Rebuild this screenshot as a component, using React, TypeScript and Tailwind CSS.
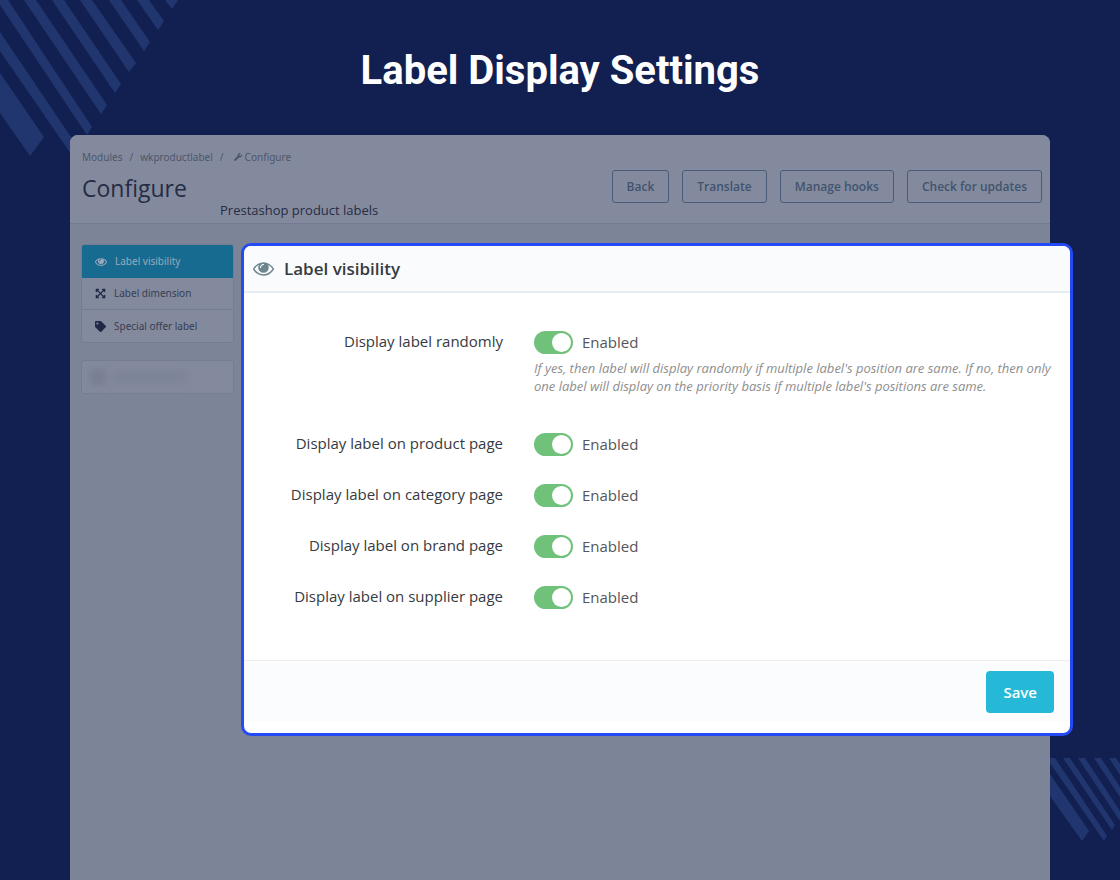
import { useState } from 'react'
import type { ReactNode } from 'react'
import { FaExpandArrowsAlt, FaTag, FaWrench } from 'react-icons/fa'

type SwitchItem = {
	id: string
	label: string
	help?: string
}

const switches: SwitchItem[] = [
	{
		id: 'randomly',
		label: 'Display label randomly',
		help: "If yes, then label will display randomly if multiple label's position are same. If no, then only one label will display on the priority basis if multiple label's positions are same.",
	},
	{ id: 'product', label: 'Display label on product page' },
	{ id: 'category', label: 'Display label on category page' },
	{ id: 'brand', label: 'Display label on brand page' },
	{ id: 'supplier', label: 'Display label on supplier page' },
]

const actions = ['Back', 'Translate', 'Manage hooks', 'Check for updates']

function EyeIcon({ className }: { className: string }) {
	return (
		<svg viewBox="0 384 1792 1152" fill="currentColor" className={className} aria-hidden="true">
			<path d="M1664 960q-152-236-381-353 61 104 61 225 0 185-131.5 316.5T896 1280t-316.5-131.5T448 832q0-121 61-225-229 117-381 353 133 205 333.5 326.5T896 1408t434.5-121.5T1664 960zM944 576q0-20-14-34t-34-14q-125 0-214.5 89.5T592 832q0 20 14 34t34 14 34-14 14-34q0-86 61-147t147-61q20 0 34-14t14-34zm848 384q0 34-20 69-140 230-376.5 368.5T896 1536t-499.5-139T20 1029Q0 994 0 960t20-69q140-229 376.5-368T896 384t499.5 139T1772 891q20 35 20 69z" />
		</svg>
	)
}

// Diagonal stripes in two corners of the backdrop
function Stripes() {
	return (
		<>
			<svg width="180" height="160" fill="#21366e" className="absolute left-0 top-0" aria-hidden="true">
				<path d="M0 73L44 137L30 156L0 113Z" />
				<path d="M0 32L71 137V154L0 51Z" />
				<path d="M0 0H8L92 127L87 135L0 5Z" />
				<path d="M24 0H36L107 105L101 114Z" />
				<path d="M52 0H64L121 84L115 93Z" />
				<path d="M80 0H92L136 63L129 72Z" />
				<path d="M109 0H121L150 42L144 51Z" />
				<path d="M137 0H149L164 21L158 30Z" />
				<path d="M165 0H178L172 9Z" />
			</svg>
			<svg width="70" height="83" fill="#21366e" className="absolute bottom-[39px] right-0" aria-hidden="true">
				<path d="M0 16L39 73L32 83L0 38Z" />
				<path d="M0 0H5L57 78L54 83L0 5Z" />
				<path d="M13 0H20L65 67L62 72Z" />
				<path d="M28 0H35L70 53V63Z" />
				<path d="M44 0H51L70 29V39Z" />
				<path d="M59 0H66L70 6V17Z" />
			</svg>
		</>
	)
}

function NavItem({ icon, active, children }: { icon: ReactNode; active?: boolean; children: ReactNode }) {
	return (
		<a
			href="#"
			className={
				active
					? 'flex h-[33px] items-center gap-2 bg-[#176b90] px-[13px] text-[#9aa9bc]'
					: 'flex h-8 items-center gap-2 border-b border-[#757d90] px-[13px] text-[#363d52] last:border-b-0'
			}
		>
			{icon}
			{children}
		</a>
	)
}

function SwitchRow({ item }: { item: SwitchItem }) {
	const [enabled, setEnabled] = useState<boolean>(true)

	return (
		<div className="grid grid-cols-[259px_1fr] gap-x-[31px]">
			<label htmlFor={item.id} className="text-right text-[15px] leading-[21px] text-[#363a41]">
				{item.label}
			</label>
			<div>
				<div className="flex items-center gap-[9px]">
					<input
						id={item.id}
						type="checkbox"
						role="switch"
						checked={enabled}
						onChange={(e) => setEnabled(e.target.checked)}
						className="flex h-[23px] w-[39px] shrink-0 cursor-pointer appearance-none items-center rounded-full bg-gray-300 p-[2px] before:block before:size-[19px] before:rounded-full before:bg-white checked:justify-end checked:bg-[#70c17a]"
					/>
					<span className="text-[15px] leading-[23px] text-[#54565b]">{enabled ? 'Enabled' : 'Disabled'}</span>
				</div>
				{item.help && (
					<p className="mb-[10px] mt-[5px] text-[13px] leading-[18px] text-[#8e8e8e] italic">{item.help}</p>
				)}
			</div>
		</div>
	)
}

function App() {
	return (
		<div className="relative flex min-h-screen flex-col overflow-hidden bg-[#112050] font-['Open_Sans',sans-serif]">
			<Stripes />
			<h1 className="relative pb-10 pt-[47px] text-center font-['Roboto',sans-serif] text-[40px] leading-[48px] font-bold text-white">
				Label Display Settings
			</h1>

			<div className="relative mx-[70px] flex flex-1 flex-col rounded-t-lg bg-[#7c8497]">
				<header className="flex h-[89px] items-start justify-between rounded-t-lg border-b border-[#737c90] bg-[#848a9d] pl-3 pr-2">
					<div>
						<nav className="flex items-center pt-[14px] font-['Noto_Sans','Open_Sans',sans-serif] text-[10px] leading-4 text-[#4c566b]">
							<a href="#">Modules</a>
							<span className="mx-[7px]">/</span>
							<a href="#">wkproductlabel</a>
							<span className="mx-[7px]">/</span>
							<a href="#" className="flex items-center gap-[3px] pl-[3px]">
								<FaWrench className="size-2" />
								Configure
							</a>
						</nav>
						<h2 className="mt-[7px] text-[23px] leading-8 text-[#242c45]">Configure</h2>
						<p className="-mt-[2px] ml-[138px] text-[13px] leading-4 text-[#242c45]">Prestashop product labels</p>
					</div>
					<div className="flex gap-[13px] pt-[35px]">
						{actions.map((action) => (
							<button
								key={action}
								type="button"
								className="h-[33px] rounded-[3px] border border-[#485c79] px-[14px] text-xs font-semibold text-[#40536f]"
							>
								{action}
							</button>
						))}
					</div>
				</header>

				<main className="flex items-start pl-[11px] pt-[19px]">
					<aside className="mt-px w-[153px] shrink-0 font-['Noto_Sans','Open_Sans',sans-serif] text-[10px]">
						<nav className="overflow-hidden rounded-[3px] border border-[#757d90] bg-[#848a9d]">
							<NavItem active icon={<EyeIcon className="h-2 w-3" />}>
								Label visibility
							</NavItem>
							<NavItem icon={<FaExpandArrowsAlt className="size-[11px] text-[#202845]" />}>Label dimension</NavItem>
							<NavItem icon={<FaTag className="size-[11px] text-[#202845]" />}>Special offer label</NavItem>
						</nav>
						<div className="mt-[17px] flex h-[34px] items-center gap-2 rounded-[3px] border border-[#757d90] bg-[#848a9d] px-2">
							<div className="size-4 bg-[#787f94] blur-[3px]" />
							<div className="h-3 w-[72px] bg-[#7c8397] blur-[4px]" />
						</div>
					</aside>

					<section className="-mr-[23px] ml-[7px] min-w-0 flex-1 overflow-hidden rounded-[10px] border-[3px] border-[#234af5] bg-white">
						<div className="flex h-[47px] items-center gap-[10px] border-b-2 border-[#e6edf2] bg-[#fafbfd] px-[9px]">
							<EyeIcon className="h-[14px] w-[21px] text-[#6c868e]" />
							<h3 className="text-[17px] leading-6 font-semibold text-[#363a41]">Label visibility</h3>
						</div>
						<form>
							<div className="flex flex-col gap-7 pb-[51px] pr-4 pt-[38px]">
								{switches.map((item) => (
									<SwitchRow key={item.id} item={item} />
								))}
							</div>
							<div className="mb-3 flex justify-end border-t border-[#eeeeee] bg-[#fbfcfe] pb-2 pr-4 pt-[10px]">
								<button
									type="button"
									className="h-[42px] rounded bg-[#25b9d7] px-[17px] text-[15px] font-semibold text-white"
								>
									Save
								</button>
							</div>
						</form>
					</section>
				</main>
			</div>
		</div>
	)
}

export default App
